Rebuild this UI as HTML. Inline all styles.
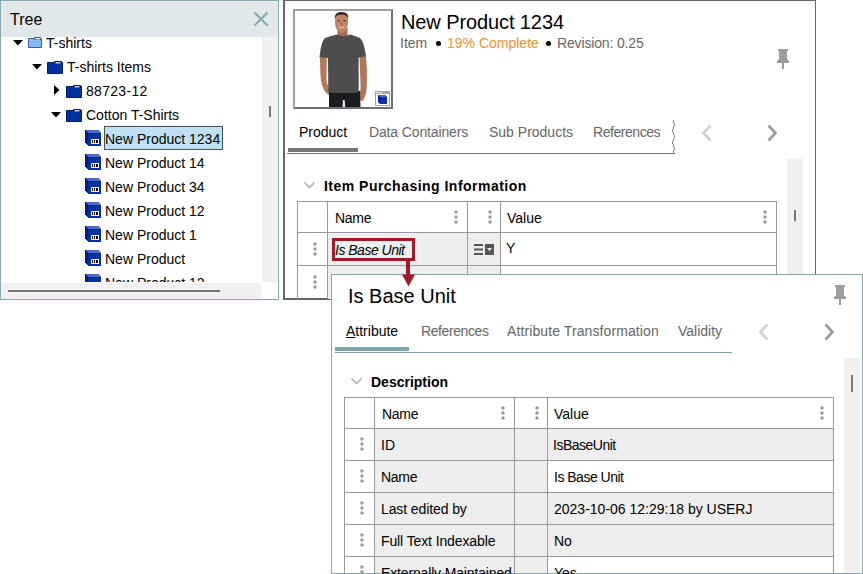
<!DOCTYPE html>
<html><head><meta charset="utf-8">
<style>
html,body{margin:0;padding:0;width:863px;height:574px;overflow:hidden;background:#fff;position:relative}
body{font-family:"Liberation Sans",sans-serif;font-size:14px;color:#000}
.a{position:absolute}
.t{position:absolute;white-space:nowrap;line-height:1;font-size:14px}
.g{color:#666}
.hl{position:absolute;height:1px;background:#999}
.vl{position:absolute;width:1px;background:#999}
.k{position:absolute;width:4px;height:14px}
</style></head><body>

<!-- ================= TREE PANEL ================= -->
<div class="a" style="left:0;top:0;width:277px;height:298px;border:1px solid #86a8b0;background:#fff;overflow:hidden">
  <div class="a" style="left:0;top:0;width:277px;height:36px;background:#e1e8ea"></div>
</div>
<div class="t" style="left:10px;top:12px;font-size:16px">Tree</div>
<svg class="a" style="left:253px;top:11px" width="16" height="16" viewBox="0 0 16 16"><path d="M1.5 1.5L14.5 14.5M14.5 1.5L1.5 14.5" stroke="#86a8b0" stroke-width="2"/></svg>

<!-- tree content -->
<div class="a" style="left:1px;top:37px;width:261px;height:245px;overflow:hidden">
  <div class="a" style="left:-1px;top:-37px;width:300px;height:400px">
    <!-- row0 T-shirts -->
    <svg class="a" style="left:13px;top:40px" width="10" height="6"><path d="M0 0H10L5 5.5Z" fill="#000"/></svg>
    <svg class="a" style="left:28px;top:37px" width="15" height="12"><path d="M0.5 1.5H13.5V10.5H0.5Z" fill="#80bdf8" stroke="#3d5f86"/><path d="M6.5 0.5H12.5L13.5 1.5V2.5H6.5Z" fill="#80bdf8" stroke="#3d5f86"/><rect x="7.5" y="1.2" width="4.5" height="1.2" fill="#fff"/></svg>
    <div class="t" style="left:46px;top:36px">T-shirts</div>
    <!-- row1 T-shirts Items -->
    <svg class="a" style="left:32px;top:64px" width="10" height="6"><path d="M0 0H10L5 5.5Z" fill="#000"/></svg>
    <svg class="a" style="left:47px;top:61px" width="16" height="13"><path d="M0.5 1.5H15.5V12.5H0.5Z" fill="#0033a0" stroke="#001a5e"/><path d="M7.5 0.5H14.5L15.5 1.5V2.5H7.5Z" fill="#0033a0" stroke="#001a5e"/><rect x="8.5" y="1.2" width="5" height="1.2" fill="#fff"/></svg>
    <div class="t" style="left:67px;top:60px">T-shirts Items</div>
    <!-- row2 88723-12 -->
    <svg class="a" style="left:54px;top:85px" width="6" height="10"><path d="M0 0V10L5.5 5Z" fill="#000"/></svg>
    <svg class="a" style="left:66px;top:85px" width="16" height="13"><path d="M0.5 1.5H15.5V12.5H0.5Z" fill="#0033a0" stroke="#001a5e"/><path d="M7.5 0.5H14.5L15.5 1.5V2.5H7.5Z" fill="#0033a0" stroke="#001a5e"/><rect x="8.5" y="1.2" width="5" height="1.2" fill="#fff"/></svg>
    <div class="t" style="left:86px;top:84px;letter-spacing:0.3px">88723-12</div>
    <!-- row3 Cotton T-Shirts -->
    <svg class="a" style="left:51px;top:112px" width="10" height="6"><path d="M0 0H10L5 5.5Z" fill="#000"/></svg>
    <svg class="a" style="left:66px;top:109px" width="16" height="13"><path d="M0.5 1.5H15.5V12.5H0.5Z" fill="#0033a0" stroke="#001a5e"/><path d="M7.5 0.5H14.5L15.5 1.5V2.5H7.5Z" fill="#0033a0" stroke="#001a5e"/><rect x="8.5" y="1.2" width="5" height="1.2" fill="#fff"/></svg>
    <div class="t" style="left:86px;top:108px">Cotton T-Shirts</div>
<svg class="a" style="left:85px;top:130px" width="16" height="16" viewBox="0 0 16 16" shape-rendering="crispEdges"><path d="M0 0L3 3V16L0 13Z" fill="#001f78"/><path d="M0 0H13L16 3H3Z" fill="#4e68c6"/><path d="M3 3H16V16H3Z" fill="#0030a6"/><rect x="6" y="9" width="8" height="5" fill="#fff"/><rect x="7" y="10" width="1" height="3" fill="#000"/><rect x="9" y="10" width="1" height="3" fill="#000"/><rect x="11" y="10" width="2" height="3" fill="#000"/></svg>
<svg class="a" style="left:85px;top:154px" width="16" height="16" viewBox="0 0 16 16" shape-rendering="crispEdges"><path d="M0 0L3 3V16L0 13Z" fill="#001f78"/><path d="M0 0H13L16 3H3Z" fill="#4e68c6"/><path d="M3 3H16V16H3Z" fill="#0030a6"/><rect x="6" y="9" width="8" height="5" fill="#fff"/><rect x="7" y="10" width="1" height="3" fill="#000"/><rect x="9" y="10" width="1" height="3" fill="#000"/><rect x="11" y="10" width="2" height="3" fill="#000"/></svg>
<svg class="a" style="left:85px;top:178px" width="16" height="16" viewBox="0 0 16 16" shape-rendering="crispEdges"><path d="M0 0L3 3V16L0 13Z" fill="#001f78"/><path d="M0 0H13L16 3H3Z" fill="#4e68c6"/><path d="M3 3H16V16H3Z" fill="#0030a6"/><rect x="6" y="9" width="8" height="5" fill="#fff"/><rect x="7" y="10" width="1" height="3" fill="#000"/><rect x="9" y="10" width="1" height="3" fill="#000"/><rect x="11" y="10" width="2" height="3" fill="#000"/></svg>
<svg class="a" style="left:85px;top:202px" width="16" height="16" viewBox="0 0 16 16" shape-rendering="crispEdges"><path d="M0 0L3 3V16L0 13Z" fill="#001f78"/><path d="M0 0H13L16 3H3Z" fill="#4e68c6"/><path d="M3 3H16V16H3Z" fill="#0030a6"/><rect x="6" y="9" width="8" height="5" fill="#fff"/><rect x="7" y="10" width="1" height="3" fill="#000"/><rect x="9" y="10" width="1" height="3" fill="#000"/><rect x="11" y="10" width="2" height="3" fill="#000"/></svg>
<svg class="a" style="left:85px;top:226px" width="16" height="16" viewBox="0 0 16 16" shape-rendering="crispEdges"><path d="M0 0L3 3V16L0 13Z" fill="#001f78"/><path d="M0 0H13L16 3H3Z" fill="#4e68c6"/><path d="M3 3H16V16H3Z" fill="#0030a6"/><rect x="6" y="9" width="8" height="5" fill="#fff"/><rect x="7" y="10" width="1" height="3" fill="#000"/><rect x="9" y="10" width="1" height="3" fill="#000"/><rect x="11" y="10" width="2" height="3" fill="#000"/></svg>
<svg class="a" style="left:85px;top:250px" width="16" height="16" viewBox="0 0 16 16" shape-rendering="crispEdges"><path d="M0 0L3 3V16L0 13Z" fill="#001f78"/><path d="M0 0H13L16 3H3Z" fill="#4e68c6"/><path d="M3 3H16V16H3Z" fill="#0030a6"/><rect x="6" y="9" width="8" height="5" fill="#fff"/><rect x="7" y="10" width="1" height="3" fill="#000"/><rect x="9" y="10" width="1" height="3" fill="#000"/><rect x="11" y="10" width="2" height="3" fill="#000"/></svg>
<svg class="a" style="left:85px;top:274px" width="16" height="16" viewBox="0 0 16 16" shape-rendering="crispEdges"><path d="M0 0L3 3V16L0 13Z" fill="#001f78"/><path d="M0 0H13L16 3H3Z" fill="#4e68c6"/><path d="M3 3H16V16H3Z" fill="#0030a6"/><rect x="6" y="9" width="8" height="5" fill="#fff"/><rect x="7" y="10" width="1" height="3" fill="#000"/><rect x="9" y="10" width="1" height="3" fill="#000"/><rect x="11" y="10" width="2" height="3" fill="#000"/></svg>
    <!-- selection -->
    <div class="a" style="left:104px;top:126px;width:117px;height:22px;background:#bfe0f2;border:1px solid #46504e"></div>
    <div class="t" style="left:105px;top:132px">New Product 1234</div>
    <div class="t" style="left:105px;top:156px">New Product 14</div>
    <div class="t" style="left:105px;top:180px">New Product 34</div>
    <div class="t" style="left:105px;top:204px">New Product 12</div>
    <div class="t" style="left:105px;top:228px">New Product 1</div>
    <div class="t" style="left:105px;top:252px">New Product</div>
    <div class="t" style="left:105px;top:276px">New Product 12</div>
  </div>
</div>
<!-- tree scrollbars -->
<div class="a" style="left:262px;top:37px;width:16px;height:245px;background:#f0f0f0"></div>
<div class="a" style="left:269px;top:106px;width:2px;height:11px;background:#777"></div>
<div class="a" style="left:1px;top:283px;width:260px;height:16px;background:#f0f0f0"></div>
<div class="a" style="left:8px;top:290px;width:212px;height:2px;background:#777"></div>

<!-- ================= MAIN PANEL ================= -->
<div class="a" style="left:283px;top:0;width:530px;height:297px;border:2px solid #666;border-top-width:1px;border-right-width:1px;background:#fff"></div>


<!-- image frame -->
<div class="a" style="left:293px;top:9px;width:96px;height:96px;border:2px solid #a0a0a0;border-right-color:#707070;border-bottom-color:#707070;background:#fff;overflow:hidden">
<svg class="a" style="left:0;top:0" width="96" height="96" viewBox="295 11 96 96">
  <rect x="295" y="11" width="96" height="96" fill="#fdfdfd"/>
  <!-- left arm -->
  <path d="M319.8 56 L326.8 57 L326.5 80 Q327 86 331 89 Q335 93 333 96 Q328 96 324.5 91 Q321 85 320.5 76 Z" fill="#b47a58"/>
  <!-- right arm -->
  <path d="M359.5 56 L366 56 Q367.5 70 366.8 86 Q366.5 96 362.5 101 Q358.5 100.5 358.5 96 Q361 91 360.5 84 Z" fill="#b07858"/>
  <!-- pants -->
  <path d="M329 91 H360 L360.5 107 H329Z" fill="#1b1b22"/>
  <path d="M343 100 L344.6 100 L345.2 107 H342.6Z" fill="#eaeaec"/>
  <!-- neck -->
  <path d="M337.5 28 H347.5 V37 H337.5Z" fill="#a56e4f"/>
  <!-- shirt -->
  <path d="M325 38 Q331 35.5 337 34.5 Q343 37.5 350 34.5 Q355 35.5 360 38 Q364 42 366 56 L358.6 57.5 L358.7 92.5 Q344 94 328.3 92.5 L328 58 L319.5 57 Q321 42 325 38Z" fill="#4d4d4d"/>
  <!-- head -->
  <path d="M334.8 18 Q334.8 12 341.5 12 Q348.2 12 348.2 18 L348 24 Q347 31.5 341.5 33 Q336 31.5 335 24Z" fill="#c0876a"/>
  <path d="M334.8 18.5 Q334.5 12 341.5 12 Q348.5 12 348.2 18.5 Q347 14.5 341.5 14.5 Q336 14.5 334.8 18.5Z" fill="#33251e"/>
  <ellipse cx="338.6" cy="20.8" rx="1.5" ry="0.8" fill="#5a3a2a"/>
  <ellipse cx="344.6" cy="20.8" rx="1.5" ry="0.8" fill="#5a3a2a"/>
  <path d="M341.5 21 L341 25" stroke="#a06a50" stroke-width="0.8"/>
  <path d="M338.6 27 Q341.5 29 344.4 27" stroke="#e6d4c6" stroke-width="1" fill="none"/>
</svg>
<svg class="a" style="left:80px;top:80px" width="15" height="15" viewBox="0 0 15 15"><rect x="0" y="0" width="15" height="15" fill="#a4a4a4"/><rect x="1" y="3" width="13" height="11" fill="#fff"/><rect x="1" y="1" width="1.3" height="1.3" fill="#fff"/><rect x="3.2" y="1" width="1.3" height="1.3" fill="#fff"/><rect x="5.4" y="1" width="1.3" height="1.3" fill="#fff"/><path d="M3 4H10L12 6V13H5L3 11Z" fill="#00207a"/><path d="M3 4H10L12 6H5Z" fill="#4a66c4"/><path d="M5 6H12V13H5Z" fill="#0a2fb4"/></svg>
</div>
<div class="t" style="left:401px;top:12px;font-size:20px;letter-spacing:-0.1px">New Product 1234</div>
<div class="t g" style="left:400px;top:36px">Item</div>
<div class="a" style="left:436px;top:41px;width:5px;height:5px;border-radius:50%;background:#000"></div>
<div class="t" style="left:447px;top:36px;color:#f7902b">19% Complete</div>
<div class="a" style="left:546px;top:41px;width:5px;height:5px;border-radius:50%;background:#000"></div>
<div class="t g" style="left:557px;top:36px;letter-spacing:-0.15px">Revision: 0.25</div>
<!-- pin -->
<svg class="a" style="left:776px;top:48px" width="14" height="22" viewBox="0 0 14 22"><path d="M2 1H12V3H11V11L13 13V15H1V13L3 11V3H2Z" fill="#9c9c9c"/><rect x="6" y="15" width="2" height="6" fill="#9c9c9c"/></svg>
<!-- tabs -->
<div class="t" style="left:299px;top:125px">Product</div>
<div class="t g" style="left:369px;top:125px;letter-spacing:-0.14px">Data Containers</div>
<div class="t g" style="left:489px;top:125px">Sub Products</div>
<div class="t g" style="left:593px;top:125px;letter-spacing:-0.45px">References</div>
<div class="a" style="left:288px;top:148px;width:70px;height:4px;background:#777"></div>
<div class="a" style="left:287px;top:153px;width:388px;height:1px;background:#777"></div>
<svg class="a" style="left:670px;top:119px" width="8" height="35" shape-rendering="crispEdges"><rect x="3" y="1" width="1" height="3" fill="#8a8a8a"/><rect x="4" y="4" width="1" height="3" fill="#8a8a8a"/><rect x="3" y="7" width="1" height="3" fill="#8a8a8a"/><rect x="2" y="10" width="1" height="3" fill="#8a8a8a"/><rect x="3" y="13" width="1" height="3" fill="#8a8a8a"/><rect x="4" y="16" width="1" height="3" fill="#8a8a8a"/><rect x="3" y="19" width="1" height="3" fill="#8a8a8a"/><rect x="2" y="22" width="1" height="3" fill="#8a8a8a"/><rect x="3" y="25" width="1" height="3" fill="#8a8a8a"/><rect x="4" y="28" width="1" height="3" fill="#8a8a8a"/><rect x="3" y="31" width="1" height="3" fill="#8a8a8a"/></svg>
<svg class="a" style="left:700px;top:124px" width="14" height="18"><path d="M10.5 1.5L3.5 9L10.5 16.5" fill="none" stroke="#cfcfcf" stroke-width="2.6"/></svg>
<svg class="a" style="left:765px;top:124px" width="14" height="18"><path d="M3.5 1.5L10.5 9L3.5 16.5" fill="none" stroke="#9a9a9a" stroke-width="2.6"/></svg>
<!-- scrollbar -->
<div class="a" style="left:787px;top:159px;width:16px;height:130px;background:#f0f0f0"></div>
<div class="a" style="left:794px;top:210px;width:2px;height:11px;background:#777"></div>
<!-- section -->
<svg class="a" style="left:303px;top:181px" width="14" height="9"><path d="M1.5 1.5L6.5 6.5L11.5 1.5" fill="none" stroke="#b4b4b4" stroke-width="1.7"/></svg>
<div class="t" style="left:324px;top:179px;font-weight:bold;letter-spacing:0.48px">Item Purchasing Information</div>
<!-- table -->
<div class="a" style="left:327px;top:233px;width:173px;height:66px;background:#eee"></div>
<div class="hl" style="left:297px;top:201px;width:480px"></div>
<div class="hl" style="left:297px;top:232px;width:480px"></div>
<div class="hl" style="left:297px;top:265px;width:480px"></div>
<div class="vl" style="left:297px;top:201px;height:98px"></div>
<div class="vl" style="left:327px;top:201px;height:98px"></div>
<div class="vl" style="left:467px;top:201px;height:98px"></div>
<div class="vl" style="left:500px;top:201px;height:98px"></div>
<div class="vl" style="left:776px;top:201px;height:98px"></div>
<div class="t" style="left:335px;top:211px;letter-spacing:-0.3px">Name</div>
<div class="t" style="left:507px;top:211px">Value</div>
<div class="t" style="left:506px;top:241px">Y</div>
<svg class="a" style="left:454px;top:210px" width="4" height="14"><circle cx="2" cy="2" r="1.7" fill="#999"/><circle cx="2" cy="7" r="1.7" fill="#999"/><circle cx="2" cy="12" r="1.7" fill="#999"/></svg>
<svg class="a" style="left:488px;top:210px" width="4" height="14"><circle cx="2" cy="2" r="1.7" fill="#999"/><circle cx="2" cy="7" r="1.7" fill="#999"/><circle cx="2" cy="12" r="1.7" fill="#999"/></svg>
<svg class="a" style="left:763px;top:210px" width="4" height="14"><circle cx="2" cy="2" r="1.7" fill="#999"/><circle cx="2" cy="7" r="1.7" fill="#999"/><circle cx="2" cy="12" r="1.7" fill="#999"/></svg>
<svg class="a" style="left:313px;top:242px" width="4" height="14"><circle cx="2" cy="2" r="1.7" fill="#999"/><circle cx="2" cy="7" r="1.7" fill="#999"/><circle cx="2" cy="12" r="1.7" fill="#999"/></svg>
<svg class="a" style="left:313px;top:275px" width="4" height="14"><circle cx="2" cy="2" r="1.7" fill="#999"/><circle cx="2" cy="7" r="1.7" fill="#999"/><circle cx="2" cy="12" r="1.7" fill="#999"/></svg>
<!-- icon -->
<svg class="a" style="left:473px;top:243px" width="22" height="13"><path d="M1 2H10M1 6.5H10M1 11H10" stroke="#555" stroke-width="2"/><rect x="12" y="1" width="9" height="11" fill="#555"/><path d="M14 5H19L16.5 8Z" fill="#fff"/></svg>
<!-- red highlight -->
<div class="a" style="left:332px;top:238px;width:77px;height:17px;border:3px solid #a01a28;background:#eee;overflow:hidden"><div class="t" style="left:0px;top:2px;font-style:italic;letter-spacing:-0.5px">Is Base Unit</div></div>

<!-- ================= POPUP ================= -->
<div class="a" style="left:331px;top:274px;width:530px;height:298px;border:1px solid #86a8b0;border-right-width:2px;background:#fff"></div>
<div class="t" style="left:348px;top:286px;font-size:20px">Is Base Unit</div>
<svg class="a" style="left:833px;top:284px" width="14" height="22" viewBox="0 0 14 22"><path d="M2 1H12V3H11V12L13 13V15H1V13L3 12V3H2Z" fill="#9c9c9c"/><rect x="6" y="15" width="2" height="6" fill="#9c9c9c"/></svg>
<div class="t" style="left:346px;top:324px"><span style="text-decoration:underline">A</span>ttribute</div>
<div class="t g" style="left:421px;top:324px;letter-spacing:-0.4px">References</div>
<div class="t g" style="left:507px;top:324px;letter-spacing:0.1px">Attribute Transformation</div>
<div class="t g" style="left:678px;top:324px">Validity</div>
<div class="a" style="left:335px;top:347px;width:74px;height:4px;background:#7fa3ab"></div>
<div class="a" style="left:335px;top:352px;width:397px;height:1px;background:#7fa3ab"></div>
<svg class="a" style="left:757px;top:323px" width="14" height="18"><path d="M10.5 1.5L3.5 9L10.5 16.5" fill="none" stroke="#cfcfcf" stroke-width="2.6"/></svg>
<svg class="a" style="left:822px;top:323px" width="14" height="18"><path d="M3.5 1.5L10.5 9L3.5 16.5" fill="none" stroke="#9a9a9a" stroke-width="2.6"/></svg>
<!-- scrollbar -->
<div class="a" style="left:844px;top:358px;width:16px;height:215px;background:#f0f0f0"></div>
<div class="a" style="left:851px;top:375px;width:2px;height:17px;background:#777"></div>
<!-- section -->
<svg class="a" style="left:350px;top:377px" width="14" height="9"><path d="M1.5 1.5L6.5 6.5L11.5 1.5" fill="none" stroke="#b4b4b4" stroke-width="1.7"/></svg>
<div class="t" style="left:371px;top:375px;font-weight:bold">Description</div>
<!-- table -->
<div class="a" style="left:375px;top:429px;width:172px;height:144px;background:#eee"></div>
<div class="a" style="left:548px;top:429px;width:285px;height:31px;background:#eee"></div>
<div class="a" style="left:548px;top:493px;width:285px;height:63px;background:#eee"></div>
<div class="hl" style="left:344px;top:397px;width:490px"></div>
<div class="hl" style="left:344px;top:428px;width:490px"></div>
<div class="hl" style="left:344px;top:460px;width:490px"></div>
<div class="hl" style="left:344px;top:492px;width:490px"></div>
<div class="hl" style="left:344px;top:524px;width:490px"></div>
<div class="hl" style="left:344px;top:556px;width:490px"></div>
<div class="vl" style="left:344px;top:397px;height:176px"></div>
<div class="vl" style="left:374px;top:397px;height:176px"></div>
<div class="vl" style="left:514px;top:397px;height:176px"></div>
<div class="vl" style="left:547px;top:397px;height:176px"></div>
<div class="vl" style="left:833px;top:397px;height:176px"></div>
<div class="t" style="left:382px;top:407px;letter-spacing:-0.3px">Name</div>
<div class="t" style="left:554px;top:407px">Value</div>
<div class="t" style="left:381px;top:438px">ID</div><div class="t" style="left:553px;top:438px;letter-spacing:-0.5px">IsBaseUnit</div>
<div class="t" style="left:381px;top:470px;letter-spacing:-0.3px">Name</div><div class="t" style="left:554px;top:470px;letter-spacing:-0.5px">Is Base Unit</div>
<div class="t" style="left:381px;top:502px;letter-spacing:-0.1px">Last edited by</div><div class="t" style="left:554px;top:502px">2023-10-06 12:29:18 by USERJ</div>
<div class="t" style="left:381px;top:534px;letter-spacing:-0.11px">Full Text Indexable</div><div class="t" style="left:554px;top:534px">No</div>
<div class="t" style="left:381px;top:566px;letter-spacing:-0.15px">Externally Maintained</div><div class="t" style="left:554px;top:566px">Yes</div>
<svg class="a" style="left:501px;top:406px" width="4" height="14"><circle cx="2" cy="2" r="1.7" fill="#999"/><circle cx="2" cy="7" r="1.7" fill="#999"/><circle cx="2" cy="12" r="1.7" fill="#999"/></svg>
<svg class="a" style="left:535px;top:406px" width="4" height="14"><circle cx="2" cy="2" r="1.7" fill="#999"/><circle cx="2" cy="7" r="1.7" fill="#999"/><circle cx="2" cy="12" r="1.7" fill="#999"/></svg>
<svg class="a" style="left:820px;top:406px" width="4" height="14"><circle cx="2" cy="2" r="1.7" fill="#999"/><circle cx="2" cy="7" r="1.7" fill="#999"/><circle cx="2" cy="12" r="1.7" fill="#999"/></svg>
<svg class="a" style="left:360px;top:437px" width="4" height="14"><circle cx="2" cy="2" r="1.7" fill="#999"/><circle cx="2" cy="7" r="1.7" fill="#999"/><circle cx="2" cy="12" r="1.7" fill="#999"/></svg>
<svg class="a" style="left:360px;top:469px" width="4" height="14"><circle cx="2" cy="2" r="1.7" fill="#999"/><circle cx="2" cy="7" r="1.7" fill="#999"/><circle cx="2" cy="12" r="1.7" fill="#999"/></svg>
<svg class="a" style="left:360px;top:501px" width="4" height="14"><circle cx="2" cy="2" r="1.7" fill="#999"/><circle cx="2" cy="7" r="1.7" fill="#999"/><circle cx="2" cy="12" r="1.7" fill="#999"/></svg>
<svg class="a" style="left:360px;top:533px" width="4" height="14"><circle cx="2" cy="2" r="1.7" fill="#999"/><circle cx="2" cy="7" r="1.7" fill="#999"/><circle cx="2" cy="12" r="1.7" fill="#999"/></svg>
<svg class="a" style="left:360px;top:565px" width="4" height="14"><circle cx="2" cy="2" r="1.7" fill="#999"/><circle cx="2" cy="7" r="1.7" fill="#999"/><circle cx="2" cy="12" r="1.7" fill="#999"/></svg>

<!-- arrow on top -->
<div class="a" style="left:406px;top:260px;width:4px;height:16px;background:#a01a28"></div>
<svg class="a" style="left:401px;top:274px" width="15" height="13"><path d="M1 0.5H14L7.5 12.5Z" fill="#a01a28"/></svg>
</body></html>
